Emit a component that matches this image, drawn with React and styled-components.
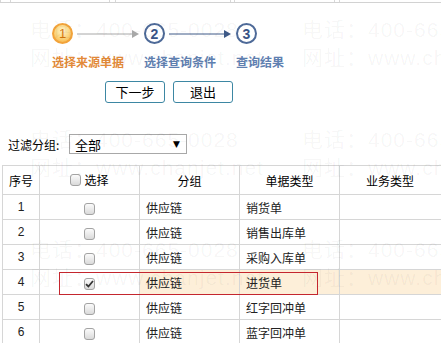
import React from "react";
import styled, { createGlobalStyle, css } from "styled-components";

const Global = createGlobalStyle`
  html, body { margin: 0; padding: 0; background: #fff; }
  body { font-family: "Liberation Sans", "Noto Sans CJK SC", sans-serif; }
`;

const Page = styled.div`
  position: relative;
  width: 441px;
  height: 343px;
  overflow: hidden;
  background: #fff;
  color: #000;
  font-family: "Liberation Sans", "Noto Sans CJK SC", sans-serif;
  font-size: 12px;
`;

const TopRule = styled.div`
  display: flex;
  height: 2px;
  border-bottom: 1px solid #d2d2d2;
`;

const Tick = styled.span`
  flex: 0 0 ${(p) => p.$w}px;
  border-left: 1px solid #d8d8d8;
  box-sizing: border-box;
`;

const Steps = styled.div`
  display: grid;
  grid-template-columns: repeat(3, 92px);
  margin: 20px 0 0 52px;
`;

const Step = styled.div`
  display: flex;
  flex-direction: column;
  align-items: flex-start;
`;

const StepHead = styled.div`
  display: flex;
  align-items: center;
  height: 21px;
`;

const Circle = styled.div`
  width: 21px;
  height: 21px;
  box-sizing: border-box;
  border-radius: 50%;
  display: flex;
  align-items: center;
  justify-content: center;
  font-family: "Liberation Sans", sans-serif;
  ${(p) =>
    p.$active
      ? css`
          border: 2px solid #f2a33a;
          background: radial-gradient(circle at 50% 35%, #fff6cf 0%, #fbd37a 55%, #f5ab3a 100%);
          color: #d5770e;
          font-size: 13px;
        `
      : css`
          border: 2px solid #4e6a98;
          background: #fff;
          color: #3a5487;
          font-size: 14px;
          font-weight: bold;
        `}
`;

const ArrowWrap = styled.svg`
  margin-left: 4px;
  display: block;
`;

const StepLabel = styled.div`
  margin-top: 11px;
  font-size: 12px;
  line-height: 14px;
  font-weight: bold;
  font-family: "Noto Sans CJK SC", sans-serif;
  white-space: nowrap;
  color: ${(p) => (p.$active ? "#e38a39" : "#5f80b1")};
`;

const Buttons = styled.div`
  display: flex;
  gap: 8px;
  margin: 12px 0 0 105px;
`;

const Button = styled.button`
  width: 60px;
  height: 22px;
  box-sizing: border-box;
  border: 1px solid #3d87a3;
  border-radius: 3px;
  background: #fff;
  color: #000;
  font-family: "Noto Sans CJK SC", sans-serif;
  font-size: 13px;
  padding: 0;
  line-height: 20px;
`;

const Filter = styled.div`
  display: flex;
  align-items: center;
  margin: 31px 0 0 8px;
  height: 20px;
`;

const FilterLabel = styled.span`
  font-family: "Noto Sans CJK SC", sans-serif;
  font-size: 12px;
  width: 61px;
`;

const Select = styled.div`
  width: 118px;
  height: 20px;
  box-sizing: border-box;
  border: 1px solid #a8a8a8;
  display: flex;
  align-items: center;
  justify-content: space-between;
  padding: 0 6px 0 5px;
  font-family: "Noto Sans CJK SC", sans-serif;
  font-size: 13px;
`;

const Caret = styled.span`
  font-size: 9px;
  font-family: "DejaVu Sans", sans-serif;
`;

const Table = styled.table`
  margin: 11px 0 0 2px;
  border-collapse: collapse;
  table-layout: fixed;
  width: 444px;
  font-family: "Liberation Sans", "Noto Sans CJK SC", sans-serif;
  font-size: 12px;
`;

const HeadCell = styled.th`
  height: 28px;
  padding: 0;
  font-weight: normal;
  border: 1px solid #d6d6d6;
  text-align: ${(p) => (p.$shift ? "left" : "center")};
  padding-left: ${(p) => (p.$shift ? "26px" : "0")};
  font-family: "Noto Sans CJK SC", sans-serif;
  font-size: 12px;
`;

const Cell = styled.td`
  height: 24px;
  padding: 0;
  padding-left: ${(p) => (p.$left ? "6px" : "0")};
  border: 1px solid #d6d6d6;
  text-align: ${(p) => (p.$left ? "left" : "center")};
  background: ${(p) => (p.$hl ? "#fdefd9" : "transparent")};
  color: #222;
  white-space: nowrap;
  font-family: ${(p) => (p.$num ? '"Liberation Sans", sans-serif' : '"Noto Sans CJK SC", sans-serif')};
`;

const HeadChoose = styled.span`
  display: inline-flex;
  align-items: center;
  gap: 3px;
`;

const Box = styled.span`
  display: inline-flex;
  align-items: center;
  justify-content: center;
  width: 11px;
  height: 12px;
  box-sizing: border-box;
  border: 1px solid #a3a3a3;
  border-radius: 3px;
  background: linear-gradient(#fbfbfb, #dadada);
  vertical-align: middle;
`;

const Watermark = styled.div`
  position: absolute;
  inset: 0;
  pointer-events: none;
`;

const Mark = styled.span`
  position: absolute;
  white-space: nowrap;
  font-family: "Liberation Sans", "Noto Sans CJK SC", sans-serif;
  font-size: 21px;
  letter-spacing: 1px;
  line-height: 24px;
  color: rgba(0, 0, 0, 0.045);
`;

const RedBox = styled.div`
  position: absolute;
  left: 59px;
  top: 272px;
  width: 259px;
  height: 23px;
  box-sizing: border-box;
  border: 1px solid #c4262e;
  pointer-events: none;
`;

function Arrow({ color }) {
  return (
    <ArrowWrap width="62" height="10" viewBox="0 0 62 10">
      <line x1="0" y1="5" x2="56" y2="5" stroke={color} strokeWidth="1" />
      <polygon points="55,1 62,5 55,9" fill={color} />
    </ArrowWrap>
  );
}

function Check({ checked }) {
  return (
    <Box>
      {checked && (
        <svg width="9" height="8" viewBox="0 0 9 8">
          <path d="M1 4.2 L3.4 6.5 L8 1" stroke="#333" strokeWidth="1.8" fill="none" />
        </svg>
      )}
    </Box>
  );
}

const steps = [
  { n: 1, label: "选择来源单据", active: true, arrow: "#a8a8a8" },
  { n: 2, label: "选择查询条件", arrow: "#3e5a88" },
  { n: 3, label: "查询结果" },
];

const rows = [
  { no: 1, group: "供应链", type: "销货单" },
  { no: 2, group: "供应链", type: "销售出库单" },
  { no: 3, group: "供应链", type: "采购入库单" },
  { no: 4, group: "供应链", type: "进货单", checked: true, hl: true },
  { no: 5, group: "供应链", type: "红字回冲单" },
  { no: 6, group: "供应链", type: "蓝字回冲单" },
];

const marks = [];
[18, 128, 238].forEach((y) => {
  [30, 302].forEach((x) => {
    marks.push({ x, y, t: "电话：400-665-0028" });
    marks.push({ x, y: y + 28, t: "网址：www.chanjet.net" });
  });
});

export default function App() {
  return (
    <Page>
      <Global />
      <TopRule>
        <Tick $w={10} />
        <Tick $w={99} />
        <Tick $w={6} />
        <Tick $w={115} />
        <Tick $w={4} />
        <Tick $w={100} />
        <Tick $w={5} />
        <Tick $w={102} />
      </TopRule>
      <Steps>
        {steps.map((s) => (
          <Step key={s.n}>
            <StepHead>
              <Circle $active={s.active}>{s.n}</Circle>
              {s.arrow && <Arrow color={s.arrow} />}
            </StepHead>
            <StepLabel $active={s.active}>{s.label}</StepLabel>
          </Step>
        ))}
      </Steps>
      <Buttons>
        <Button>下一步</Button>
        <Button>退出</Button>
      </Buttons>
      <Filter>
        <FilterLabel>过滤分组:</FilterLabel>
        <Select>
          <span>全部</span>
          <Caret>▼</Caret>
        </Select>
      </Filter>
      <Table>
        <colgroup>
          <col style={{ width: 37 }} />
          <col style={{ width: 100 }} />
          <col style={{ width: 100 }} />
          <col style={{ width: 100 }} />
          <col />
        </colgroup>
        <thead>
          <tr>
            <HeadCell>序号</HeadCell>
            <HeadCell>
              <HeadChoose>
                <Check />
                选择
              </HeadChoose>
            </HeadCell>
            <HeadCell>分组</HeadCell>
            <HeadCell>单据类型</HeadCell>
            <HeadCell $shift>业务类型</HeadCell>
          </tr>
        </thead>
        <tbody>
          {rows.map((r) => (
            <tr key={r.no}>
              <Cell $num>{r.no}</Cell>
              <Cell>
                <Check checked={r.checked} />
              </Cell>
              <Cell $left $hl={r.hl}>{r.group}</Cell>
              <Cell $left $hl={r.hl}>{r.type}</Cell>
              <Cell $left $hl={r.hl}></Cell>
            </tr>
          ))}
        </tbody>
      </Table>
      <Watermark>
        {marks.map((m, i) => (
          <Mark key={i} style={{ left: m.x, top: m.y }}>
            {m.t}
          </Mark>
        ))}
      </Watermark>
      <RedBox />
    </Page>
  );
}
